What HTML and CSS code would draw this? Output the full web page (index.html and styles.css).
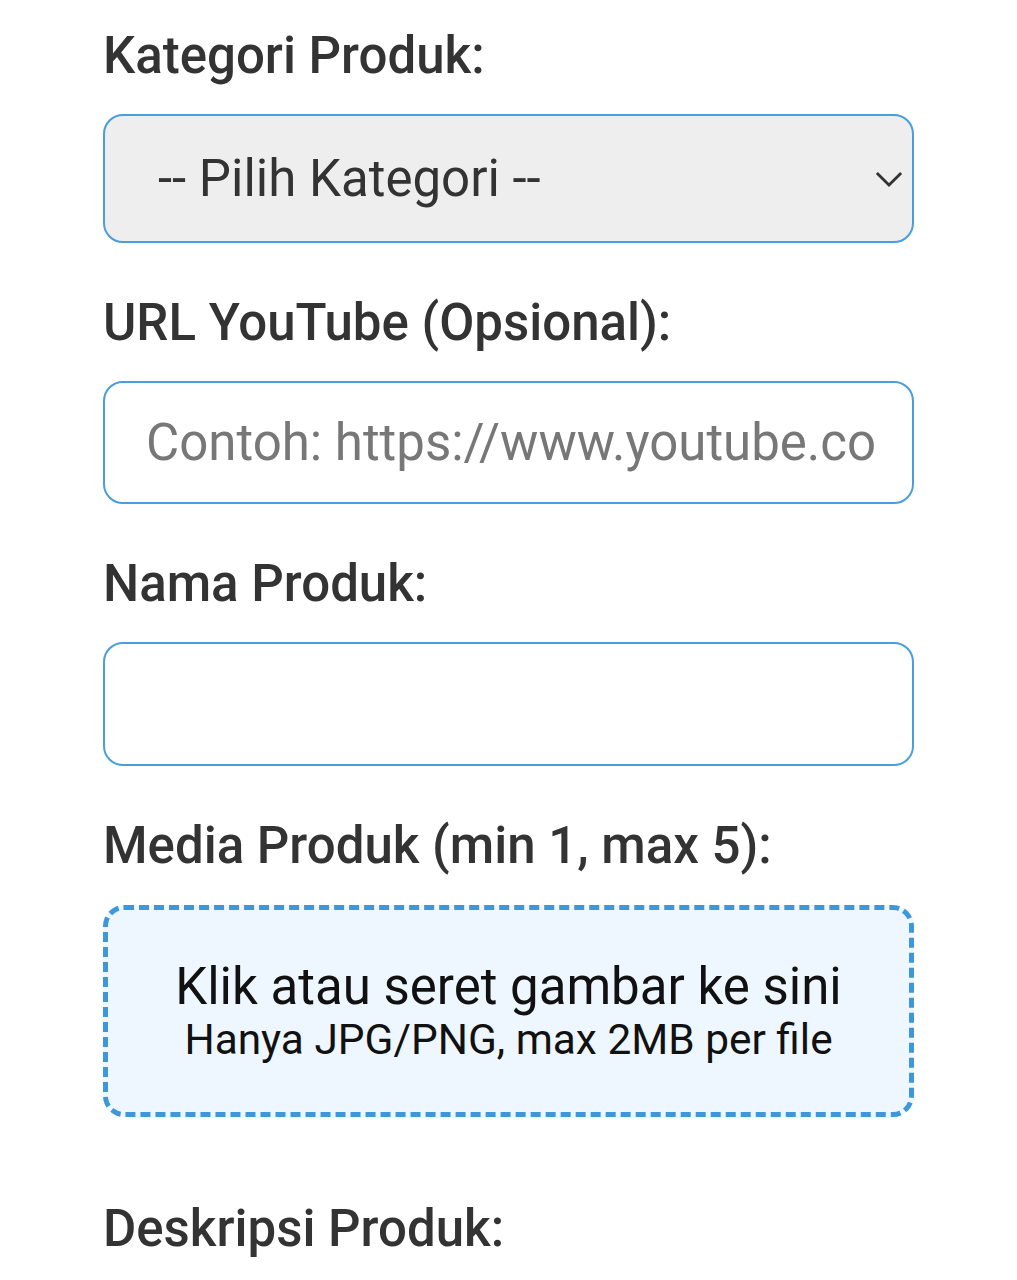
FILE: index.html
```html
<!DOCTYPE html>
<html lang="id">
<head>
<meta charset="utf-8">
<link rel="stylesheet" href="styles.css">
</head>
<body>
<form class="form">
  <label class="label" for="kategori">Kategori Produk:</label>
  <div class="select-wrap">
    <select id="kategori" class="control select">
      <option>-- Pilih Kategori --</option>
    </select>
    <svg class="chevron" width="30" height="18" viewBox="0 0 30 18"><path d="M2 2 L15 15 L28 2" fill="none" stroke="#333" stroke-width="3"/></svg>
  </div>

  <label class="label" for="yt">URL YouTube (Opsional):</label>
  <input id="yt" class="control input" type="text" placeholder="Contoh: https://www.youtube.com/watch?v=...">

  <label class="label" for="nama">Nama Produk:</label>
  <input id="nama" class="control input input-tall" type="text">

  <label class="label">Media Produk (min 1, max 5):</label>
  <div class="dropzone">
    <div class="dz-main">Klik atau seret gambar ke sini</div>
    <div class="dz-sub">Hanya JPG/PNG, max 2MB per file</div>
  </div>

  <label class="label label-desc" for="desk">Deskripsi Produk:</label>
</form>
</body>
</html>
```

FILE: styles.css
```css
* { box-sizing: border-box; }
html, body { margin: 0; padding: 0; background: #ffffff; }
body {
  font-family: Roboto, "Noto Sans", sans-serif;
  color: #333;
}
.form {
  width: 811px;
  margin: 0 0 0 103px;
  padding-top: 26px;
  display: flex;
  flex-direction: column;
}
.label {
  display: block;
  font-size: 51px;
  line-height: 60px;
  font-weight: 500;
  color: #333;
  margin-bottom: 28px;
}
.control {
  display: block;
  width: 100%;
  border: 2.6px solid #4a9edb;
  border-radius: 20px;
  font-family: Roboto, "Noto Sans", sans-serif;
  font-size: 51px;
  color: #333;
  margin: 0 0 50px 0;
  outline: none;
}
.select-wrap {
  position: relative;
}
.select {
  appearance: none;
  -webkit-appearance: none;
  height: 129px;
  background: #eeeeee;
  padding: 0 80px 0 53px;
}
.chevron {
  position: absolute;
  right: 11px;
  top: 57px;
  width: 28px;
  height: 17px;
}
.input {
  height: 123px;
  background: #fff;
  padding: 0 38px 0 41px;
}
.input-tall { height: 124px; }
.input::placeholder { color: #777; }
.dropzone {
  height: 212px;
  margin-top: 1px;
  border: 5px dashed #3d98db;
  border-radius: 21px;
  background: #eef7ff;
  display: flex;
  flex-direction: column;
  align-items: center;
  justify-content: center;
  color: #111;
  margin-bottom: 82px;
}
.dz-main {
  font-size: 51px;
  line-height: 58px;
}
.dz-sub {
  font-size: 42.4px;
  line-height: 48px;
}
```
